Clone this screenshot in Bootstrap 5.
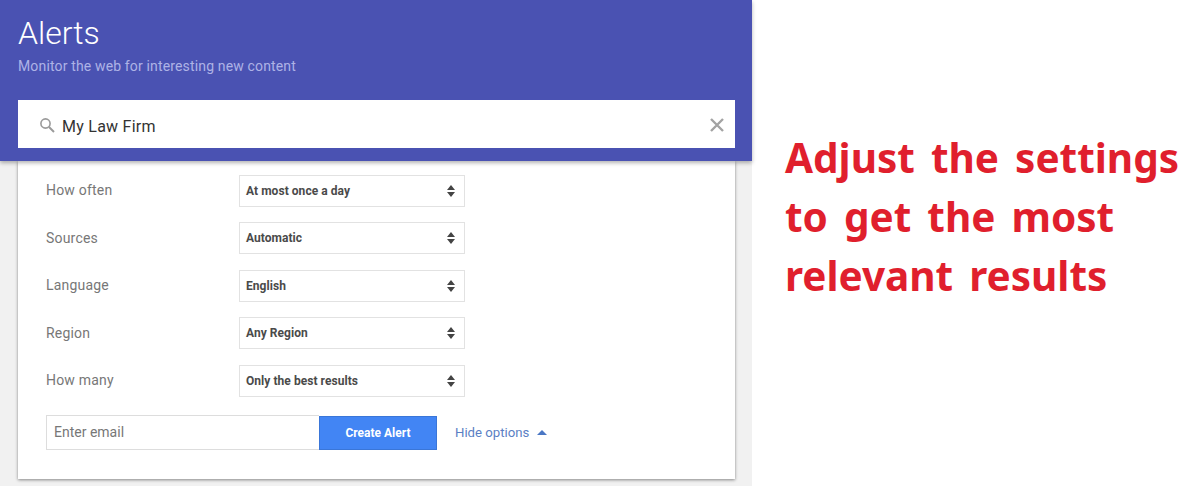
<!DOCTYPE html>
<html lang="en">
<head>
  <meta charset="UTF-8">
  <title>Alerts</title>
  <link rel="stylesheet" href="https://cdn.jsdelivr.net/npm/bootstrap@5.3.3/dist/css/bootstrap.min.css">
  <style>
    body { margin: 0; background: #fff; font-family: Roboto, sans-serif; overflow: hidden; }
    .page { height: 486px; }
    .left-pane { width: 752px; height: 486px; background: #f1f1f1; flex: none; }
    .blue-head { height: 161px; background: #4a52b2; padding: 13px 17px 0 18px; box-shadow: 0 2px 4px rgba(0,0,0,.3); position: relative; z-index: 2; }
    .head-title { font-size: 32px; font-weight: 300; color: #fff; line-height: 40px; margin: 0; }
    .head-sub { font-size: 14px; letter-spacing: .15px; color: #aeb3e6; line-height: 20px; margin-top: 3px; margin-bottom: 24px; }
    .search-box { height: 48px; background: #fff; padding: 2px 11px 0 21px; font-size: 16px; letter-spacing: .25px; color: #333; }
    .search-box span { margin-left: -1px; padding-top: 4px; }
    .form-card { margin: 0 17px 0 18px; height: 318px; background: #fff; padding: 14px 28px 0; box-shadow: 0 1px 3px rgba(0,0,0,.45); }
    .opt-row { height: 31px; margin-bottom: 16.5px; }
    .opt-label { width: 193px; font-size: 14px; letter-spacing: .2px; color: #777; }
    .fake-select { width: 226px; height: 32px; border: 1px solid #e2e2e2; padding: 0 8px 0 6px; font-size: 12px; font-weight: 700; letter-spacing: .05px; color: #4a4a4a; }
    .email-row { padding-top: 2.5px; }
    .email-input { width: 273px; height: 35px; border: 1px solid #ddd; border-right: 0; padding: 0 7px; font-size: 14px; color: #777; }
    .create-btn { width: 118px; height: 34px; margin-top: 1px; background: #4285f4; border: 1px solid #3a76d8; border-radius: 0; color: #fff; font-size: 12px; font-weight: 700; padding: 0; }
    .create-btn:hover { background: #4285f4; color: #fff; }
    .hide-link { margin-left: 18px; font-size: 13.2px; color: #5b7fc4; text-decoration: none; }
    .note { padding: 128px 0 0 33px; }
    .note-text { font-family: "Noto Sans", "Open Sans", sans-serif; font-weight: 700; font-size: 40.5px; line-height: 59px; color: #e01f2d; word-spacing: 5.5px; margin: 0; white-space: nowrap; }
  </style>
</head>
<body>
<div class="page d-flex">
  <div class="left-pane">
    <div class="blue-head">
      <h1 class="head-title">Alerts</h1>
      <div class="head-sub">Monitor the web for interesting new content</div>
      <div class="search-box d-flex align-items-center">
        <svg width="16" height="16" viewBox="0 0 16 16" class="me-2" fill="none" stroke="#9a9a9a" stroke-width="1.6"><circle cx="6.5" cy="6.5" r="4.6"/><path d="M10 10l5 5" stroke-width="2"/></svg>
        <span>My Law Firm</span>
        <svg width="14" height="14" viewBox="0 0 14 14" class="ms-auto" stroke="#a3a3a3" stroke-width="2.4"><path d="M1 1l12 12M13 1L1 13"/></svg>
      </div>
    </div>
    <div class="form-card">
      <div class="opt-row d-flex align-items-center">
        <div class="opt-label">How often</div>
        <div class="fake-select d-flex align-items-center justify-content-between"><span>At most once a day</span><svg width="10" height="14" viewBox="0 0 10 14" fill="#444"><path d="M5 1l4 5H1zM5 13L1 8h8z"/></svg></div>
      </div>
      <div class="opt-row d-flex align-items-center">
        <div class="opt-label">Sources</div>
        <div class="fake-select d-flex align-items-center justify-content-between"><span>Automatic</span><svg width="10" height="14" viewBox="0 0 10 14" fill="#444"><path d="M5 1l4 5H1zM5 13L1 8h8z"/></svg></div>
      </div>
      <div class="opt-row d-flex align-items-center">
        <div class="opt-label">Language</div>
        <div class="fake-select d-flex align-items-center justify-content-between"><span>English</span><svg width="10" height="14" viewBox="0 0 10 14" fill="#444"><path d="M5 1l4 5H1zM5 13L1 8h8z"/></svg></div>
      </div>
      <div class="opt-row d-flex align-items-center">
        <div class="opt-label">Region</div>
        <div class="fake-select d-flex align-items-center justify-content-between"><span>Any Region</span><svg width="10" height="14" viewBox="0 0 10 14" fill="#444"><path d="M5 1l4 5H1zM5 13L1 8h8z"/></svg></div>
      </div>
      <div class="opt-row d-flex align-items-center">
        <div class="opt-label">How many</div>
        <div class="fake-select d-flex align-items-center justify-content-between"><span>Only the best results</span><svg width="10" height="14" viewBox="0 0 10 14" fill="#444"><path d="M5 1l4 5H1zM5 13L1 8h8z"/></svg></div>
      </div>
      <div class="email-row d-flex align-items-center">
        <div class="email-input d-flex align-items-center">Enter email</div>
        <button type="button" class="btn create-btn">Create Alert</button>
        <a href="#" class="hide-link d-flex align-items-center gap-2">Hide options <svg width="10" height="5" viewBox="0 0 10 5" fill="#4a77c4"><path d="M5 0l5 5H0z"/></svg></a>
      </div>
    </div>
  </div>
  <div class="note">
    <p class="note-text">Adjust the settings<br>to get the most<br>relevant results</p>
  </div>
</div>
<script src="https://cdn.jsdelivr.net/npm/bootstrap@5.3.3/dist/js/bootstrap.bundle.min.js"></script>
</body>
</html>
